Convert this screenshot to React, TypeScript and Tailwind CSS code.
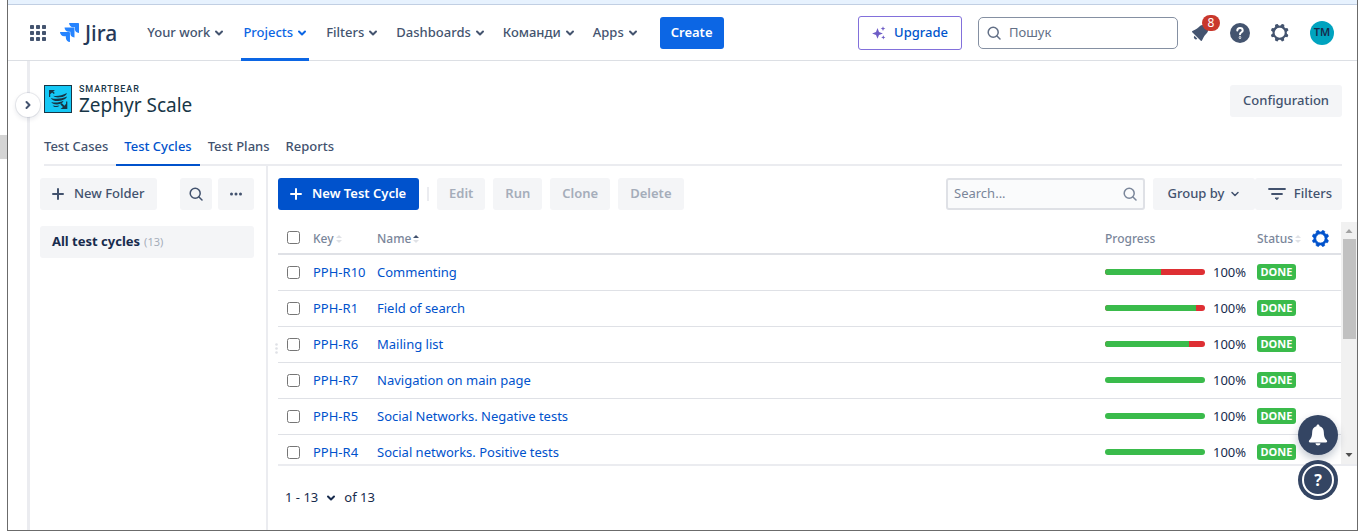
import React from "react";

const GEAR =
  "M11.701 16.7a5.002 5.002 0 110-10.003 5.002 5.002 0 010 10.004m8.368-3.117a1.995 1.995 0 01-1.346-1.885c0-.876.563-1.613 1.345-1.885a.48.48 0 00.315-.574 8.947 8.947 0 00-.836-1.993.477.477 0 00-.598-.195 2.04 2.04 0 01-1.29.08 1.988 1.988 0 01-1.404-1.395 2.04 2.04 0 01.076-1.297.478.478 0 00-.196-.597 8.98 8.98 0 00-1.975-.826.479.479 0 00-.574.314 1.995 1.995 0 01-1.885 1.346 1.994 1.994 0 01-1.884-1.345.482.482 0 00-.575-.315c-.708.2-1.379.485-2.004.842a.47.47 0 00-.198.582A2.002 2.002 0 014.445 7.06a.478.478 0 00-.595.196 8.946 8.946 0 00-.833 1.994.48.48 0 00.308.572 1.995 1.995 0 011.323 1.877c0 .867-.552 1.599-1.324 1.877a.479.479 0 00-.308.57 8.99 8.99 0 00.723 1.79.477.477 0 00.624.194c.595-.273 1.343-.264 2.104.238.117.077.225.185.302.3.527.8.512 1.58.198 2.188a.473.473 0 00.168.628 8.946 8.946 0 002.11.897.474.474 0 00.57-.313 1.995 1.995 0 011.886-1.353c.87 0 1.606.552 1.885 1.353a.477.477 0 00.571.313 8.964 8.964 0 001.883-.77.474.474 0 00.18-.63c-.307-.605-.31-1.373.225-2.168.08-.118.194-.23.313-.308.767-.502 1.52-.508 2.12-.23a.477.477 0 00.624-.193c.314-.559.564-1.158.743-1.786a.476.476 0 00-.31-.575";

const NAV = ["Your work", "Projects", "Filters", "Dashboards", "Команди", "Apps"];
const TABS = ["Test Cases", "Test Cycles", "Test Plans", "Reports"];
const CYCLES = [
  { id: "PPH-R10", name: "Commenting", passed: 56 },
  { id: "PPH-R1", name: "Field of search", passed: 91 },
  { id: "PPH-R6", name: "Mailing list", passed: 84 },
  { id: "PPH-R7", name: "Navigation on main page", passed: 100 },
  { id: "PPH-R5", name: "Social Networks. Negative tests", passed: 100 },
  { id: "PPH-R4", name: "Social networks. Positive tests", passed: 100 },
];

function Chevron({ className = "" }: { className?: string }) {
  return (
    <svg viewBox="0 0 10 8" className={`h-2 w-2.5 shrink-0 stroke-2 ${className}`} fill="none" stroke="currentColor" strokeLinecap="round" strokeLinejoin="round">
      <path d="M2 2.5l3 3 3-3" />
    </svg>
  );
}

function Magnifier({ className = "" }: { className?: string }) {
  return (
    <svg viewBox="0 0 14 14" className={`size-3.5 shrink-0 ${className}`} fill="none" stroke="currentColor" strokeWidth="1.5" strokeLinecap="round">
      <circle cx="6.2" cy="6.2" r="5" />
      <path d="M10 10l3 3" />
    </svg>
  );
}

function Plus() {
  return (
    <svg viewBox="0 0 12 12" className="size-3 shrink-0" stroke="currentColor" strokeWidth="2" strokeLinecap="round">
      <path d="M6 1v10M1 6h10" />
    </svg>
  );
}

function SortArrows({ up = false }: { up?: boolean }) {
  return (
    <svg viewBox="0 0 6 8" className="h-2 w-1.5 shrink-0">
      <path d="M0 3l3-3 3 3z" fill={up ? "#42526e" : "#dfe1e6"} />
      <path d="M0 5h6l-3 3z" fill="#dfe1e6" />
    </svg>
  );
}

function ZephyrMark() {
  return (
    <svg viewBox="0 0 28 28" className="size-7 shrink-0">
      <rect x="0.5" y="0.5" width="27" height="27" fill="#15c8f5" stroke="#173647" />
      <g fill="#173647">
        <path d="M5 5h6L9.200 6.600l1.600 1.500-1 1-1.700-1.500L6.200 9.200V12H5z" />
        <path d="M23.300 24H16.500l2.500-2-2.600-2.600 1.300-1.300 2.700 2.600 1.700-1.900V16.500h1.200z" />
        <path d="M9.200 10.700c4.500.6 8.800-.3 13.800-2.800-.6 2.500-3.400 4-7.200 4.400-3 .3-5.400-.200-6.600-1.600z" />
        <path d="M6.800 12.900c4.500 1.700 10.500 1 16.200-1.300-.8 2.600-4.300 4.200-8.700 4.400-3.900.1-6.600-.9-7.500-3.100z" />
        <path d="M7.300 17c3.500 1.200 8.200.6 12.400-1.200-.9 2.300-3.300 3.500-6.400 3.600-3.200.1-5.300-.7-6-2.400z" />
        <path d="M8.700 20.500c2.300.6 4.600.5 6.800-.1-1 1.300-2.400 1.800-4 1.700-1.400-.1-2.400-.7-2.800-1.600z" />
      </g>
    </svg>
  );
}

function TopBar() {
  return (
    <header className="flex h-14 shrink-0 items-center border-b border-[#dcdfe4] pr-[23px] pl-[22px] text-[#44546f]">
      <button type="button" aria-label="Switch apps">
        <svg viewBox="0 0 16 16" className="size-4" fill="currentColor">
          {[0, 6, 12].map((y) => [0, 6, 12].map((x) => <rect key={`${x}-${y}`} x={x} y={y} width="4" height="4" rx="0.8" />))}
        </svg>
      </button>
      <a href="#home" className="ml-3.5 flex items-center gap-1.5 text-[#253858]">
        <svg viewBox="0 0 24 24" className="size-[19px]" fill="#2684ff">
          <path d="M11.571 11.513H0a5.218 5.218 0 0 0 5.232 5.215h2.130v2.057A5.215 5.215 0 0 0 12.575 24V12.518a1.005 1.005 0 0 0-1.005-1.005z" />
          <path d="M17.294 5.757H5.736a5.215 5.215 0 0 0 5.215 5.214h2.129v2.058a5.218 5.218 0 0 0 5.215 5.214V6.758a1.001 1.001 0 0 0-1.001-1.001z" />
          <path d="M23.013 0H11.455a5.215 5.215 0 0 0 5.215 5.215h2.129v2.057A5.215 5.215 0 0 0 24 12.483V1.005A1.001 1.001 0 0 0 23.013 0Z" />
        </svg>
        <span className="text-[21px] leading-6 font-medium">Jira</span>
      </a>
      <nav className="ml-6 flex h-14 items-stretch gap-1.5 text-[13px] font-medium">
        {NAV.map((item) => (
          <button
            key={item}
            type="button"
            className={
              item === "Projects"
                ? "mx-[5px] flex items-center gap-1 border-y-3 border-t-transparent border-b-[#0c66e4] px-0.5 text-[#0c66e4]"
                : "flex items-center gap-1 px-1.5"
            }
          >
            {item}
            <Chevron />
          </button>
        ))}
      </nav>
      <button type="button" className="ml-4 h-8 rounded-[3px] bg-[#0c66e4] px-[11px] text-[13px] font-semibold text-white">
        Create
      </button>
      <div className="ml-auto flex items-center">
        <button type="button" className="flex h-[34px] w-[104px] items-center justify-center gap-2 rounded-[3px] border border-[#8270db] text-[13px] font-medium text-[#0055cc]">
          <svg viewBox="0 0 14 14" className="size-3.5" fill="#6e5dc6">
            <path d="M5.500 2L7 5.900 10.900 7.400 7 8.900 5.500 12.800 4 8.900.1 7.400 4 5.900z" />
            <path d="M11 .2l.7 1.700 1.700.7-1.700.7L11 5l-.7-1.700-1.700-.7 1.700-.7zM11.300 9.300l.6 1.500 1.500.6-1.500.6-.6 1.500-.6-1.500-1.500-.6 1.500-.6z" />
          </svg>
          Upgrade
        </button>
        <label className="ml-4 flex h-8 w-[200px] items-center gap-2 rounded-[5px] border border-[#8590a2] px-2 text-[#626f86]">
          <Magnifier />
          <input aria-label="Пошук" placeholder="Пошук" className="w-full min-w-0 text-[13px] outline-none placeholder:text-[#626f86]" />
        </label>
        <button type="button" aria-label="Notifications" className="relative ml-2.5">
          <svg viewBox="0 0 24 24" className="size-6" fill="currentColor">
            <path d="M6.485 17.669a2 2 0 002.829 0l-2.829-2.830a2 2 0 000 2.830zm4.897-12.191l-.725.725c-.782.782-2.210 1.813-3.206 2.311l-3.017 1.509c-.495.248-.584.774-.187 1.171l8.556 8.556c.398.396.922.313 1.171-.188l1.510-3.016c.494-.988 1.526-2.420 2.311-3.206l.725-.726a5.048 5.048 0 00.640-6.356 1.010 1.010 0 10-1.354-1.494c-.023.025-.046.049-.066.075a5.043 5.043 0 00-2.788-.840 5.036 5.036 0 00-3.570 1.478z" />
          </svg>
          <span className="absolute -top-1.5 left-3.5 flex h-4 w-[18px] items-center justify-center rounded-full bg-[#c9372c] text-[12px] leading-4 text-white">8</span>
        </button>
        <button type="button" aria-label="Help" className="ml-[18px] flex size-5 items-center justify-center rounded-full bg-[#44546f] text-white">
          <svg viewBox="0 0 12 14" className="h-3.5 w-3" fill="none" stroke="currentColor" strokeWidth="2" strokeLinecap="round">
            <path d="M3.300 4.600C3.300 2.900 4.400 2 6 2s2.700 1 2.700 2.400C8.700 6.300 6 6.300 6 8.300" />
            <circle cx="6" cy="11.600" r="0.300" />
          </svg>
        </button>
        <button type="button" aria-label="Settings" className="ml-[18px]">
          <svg viewBox="0 0 24 24" className="size-6" fill="currentColor" fillRule="evenodd">
            <path d={GEAR} />
          </svg>
        </button>
        <button type="button" aria-label="Your profile" className="ml-[18px] flex size-6 items-center justify-center rounded-full bg-[#00a3bf] text-[11px] font-semibold text-[#172b4d]">
          TM
        </button>
      </div>
    </header>
  );
}

function AppHeader() {
  return (
    <div className="pr-[15px] pl-3.5">
      <div className="flex items-start justify-between pt-6">
        <div className="flex gap-[7px] text-[#173647]">
          <ZephyrMark />
          <div className="flex flex-col">
            <span className="font-['Roboto','Noto_Sans',sans-serif] text-[9px] leading-[9px] font-medium tracking-widest">SMARTBEAR</span>
            <span className="text-[19px] leading-[22px]">Zephyr Scale</span>
          </div>
        </div>
        <button type="button" className="h-8 rounded-[3px] bg-[#f4f5f7] px-[13px] text-[13px] font-medium text-[#42526e]">
          Configuration
        </button>
      </div>
      <div className="mt-3 flex h-[37px] border-b-2 border-[#ebecf0] text-[13px] font-medium text-[#42526e]">
        {TABS.map((t, i) => (
          <a
            key={t}
            href={`#tab-${i}`}
            className={
              t === "Test Cycles"
                ? "-mb-0.5 flex items-center border-b-2 border-[#0052cc] px-2 text-[#0052cc]"
                : "flex items-center px-2 first:pl-0"
            }
          >
            {t}
          </a>
        ))}
      </div>
    </div>
  );
}

function FolderPane() {
  return (
    <aside className="w-[238px] shrink-0 border-r-2 border-[#ebecf0] pt-3 pr-3 pl-2.5 text-[#42526e]">
      <div className="flex">
        <button type="button" className="flex h-8 w-[117px] items-center gap-2.5 rounded-[3px] bg-[#f4f5f7] px-3 text-[13px] font-medium whitespace-nowrap">
          <Plus />
          New Folder
        </button>
        <button type="button" aria-label="Search folders" className="ml-auto flex size-8 items-center justify-center rounded-[3px] bg-[#f4f5f7]">
          <Magnifier />
        </button>
        <button type="button" aria-label="More" className="ml-1.5 flex h-8 w-9 items-center justify-center rounded-[3px] bg-[#f4f5f7]">
          <svg viewBox="0 0 12 4" className="h-1 w-3" fill="currentColor">
            <circle cx="1.500" cy="2" r="1.500" />
            <circle cx="6" cy="2" r="1.500" />
            <circle cx="10.500" cy="2" r="1.500" />
          </svg>
        </button>
      </div>
      <a href="#all" className="mt-4 flex h-8 items-center gap-1 rounded-[3px] bg-[#f4f5f7] px-3">
        <span className="text-[13px] font-bold text-[#172b4d]">All test cycles</span>
        <span className="text-[11px] text-[#a5adba]">(13)</span>
      </a>
    </aside>
  );
}

function Toolbar() {
  return (
    <div className="mr-[15px] flex h-8 shrink-0 text-[13px] font-medium text-[#42526e]">
      <button type="button" className="flex w-[141px] items-center gap-2.5 rounded-[3px] bg-[#0052cc] px-3 font-semibold whitespace-nowrap text-white">
        <Plus />
        New Test Cycle
      </button>
      <span className="mx-2 h-3.5 w-0.5 self-center bg-[#ebecf0]" />
      <div className="flex gap-2 font-semibold text-[#a5adba]">
        {["Edit", "Run", "Clone", "Delete"].map((a) => (
          <button key={a} type="button" disabled className="rounded-[3px] bg-[#f4f5f7] px-3">
            {a}
          </button>
        ))}
      </div>
      <label className="ml-auto flex w-[199px] items-center rounded-[3px] border-2 border-[#dfe1e6] bg-[#fafbfc] px-1.5 text-[#7a869a]">
        <input aria-label="Search" placeholder="Search..." className="w-full min-w-0 font-normal outline-none placeholder:text-[#7a869a]" />
        <Magnifier />
      </label>
      <button type="button" className="ml-2 flex w-[102px] items-center justify-center gap-1.5 rounded-[3px] bg-[#f4f5f7]">
        Group by
        <Chevron className="stroke-[1.5]" />
      </button>
      <button type="button" className="flex w-[87px] items-center justify-end gap-2 rounded-[3px] bg-[#f4f5f7] pr-2.5">
        <svg viewBox="0 0 18 12" className="h-3 w-[18px]" fill="none" stroke="currentColor" strokeWidth="1.800" strokeLinecap="round">
          <path d="M1 1h16M4 6h10" />
          <path d="M7.500 10h3L9 11.500z" strokeWidth="1" fill="currentColor" />
        </svg>
        Filters
      </button>
    </div>
  );
}

function CycleTable() {
  return (
    <table className="w-full table-fixed border-collapse text-left text-[13px]">
      <colgroup>
        <col className="w-[35px]" />
        <col className="w-[64px]" />
        <col />
        <col className="w-[152px]" />
        <col className="w-[84px]" />
      </colgroup>
      <thead className="text-[12px] text-[#7a869a]">
        <tr className="h-[33px] shadow-[inset_0_-2px_0_#dfe1e6]">
          <th className="pb-0.5 pl-[9px]">
            <input type="checkbox" aria-label="Select all" className="block size-[13px]" />
          </th>
          <th className="font-medium">
            <span className="flex items-center gap-0.5">Key<SortArrows /></span>
          </th>
          <th className="font-medium">
            <span className="flex items-center gap-0.5">Name<SortArrows up /></span>
          </th>
          <th className="font-medium">Progress</th>
          <th className="font-medium">
            <span className="flex items-center gap-0.5">
              Status
              <SortArrows />
              <button type="button" aria-label="Table settings" className="mr-3 ml-auto text-[#0052cc]">
                <svg viewBox="2.500 2.500 18.500 18.500" className="size-[17px]" fill="currentColor" stroke="currentColor" strokeWidth="0.800" fillRule="evenodd">
                  <path d={GEAR} />
                </svg>
              </button>
            </span>
          </th>
        </tr>
      </thead>
      <tbody>
        {CYCLES.map((c) => (
          <tr key={c.id} className="h-9 shadow-[inset_0_-1px_0_#dfe1e6]">
            <td className="pb-0.5 pl-[9px]">
              <input type="checkbox" aria-label={`Select ${c.id}`} className="block size-[13px]" />
            </td>
            <td className="whitespace-nowrap">
              <a href={`#${c.id}`} className="text-[#0052cc]">{c.id}</a>
            </td>
            <td>
              <a href={`#${c.id}`} className="text-[#0052cc]">{c.name}</a>
            </td>
            <td>
              <div className="flex items-center gap-2 text-[#172b4d]">
                <div className="mb-0.5 flex h-1.5 w-[100px] shrink-0 overflow-hidden rounded-full bg-[#de2f33]">
                  <div className="bg-[#3abb4b]" style={{ width: `${c.passed}%` }} />
                </div>
                100%
              </div>
            </td>
            <td className="pb-0.5">
              <span className="block h-4 w-[39px] rounded-[3px] bg-[#3abb4b] text-center text-[11px] leading-4 font-bold text-white">DONE</span>
            </td>
          </tr>
        ))}
      </tbody>
    </table>
  );
}

function ScrollTrack() {
  return (
    <div aria-hidden="true" className="flex w-4 shrink-0 flex-col items-center bg-[#f1f1f1]">
      <svg viewBox="0 0 16 17" className="h-[17px] w-4" fill="#a3a3a3">
        <path d="M4.500 11h7L8 7z" />
      </svg>
      <div className="h-[100px] w-[13px] bg-[#c1c1c1]" />
      <svg viewBox="0 0 16 17" className="mt-auto h-[17px] w-4" fill="#505050">
        <path d="M4.500 6h7L8 10z" />
      </svg>
    </div>
  );
}

export default function App() {
  return (
    <div className="relative h-screen overflow-hidden bg-white px-[7px] font-['Noto_Sans','Open_Sans',sans-serif]">
      <div className="absolute top-[135px] left-0 h-6 w-[7px] bg-[#d4d4d4]" />
      <div className="relative flex h-full flex-col border-x border-b border-[#6b6b6b]">
        <div className="h-[5px] shrink-0 border-b border-[#c1cfe3] bg-[#e7f2fe]" />
        <TopBar />
        <div className="flex min-h-0 flex-1">
          <div className="relative w-[22px] shrink-0 border-r-3 border-[#ebecf0]">
            <button type="button" aria-label="Expand sidebar" className="absolute top-8 left-2 flex size-6 items-center justify-center rounded-full bg-white text-[#42526e] shadow-[0_0_0_1px_rgba(9,30,66,0.08),0_2px_4px_1px_rgba(9,30,66,0.08)]">
              <Chevron className="-rotate-90" />
            </button>
          </div>
          <div className="flex min-w-0 flex-1 flex-col">
            <AppHeader />
            <div className="flex min-h-0 flex-1">
              <FolderPane />
              <main className="relative flex min-w-0 flex-1 flex-col pt-3 pl-2.5">
                <svg viewBox="0 0 3 11" className="absolute top-[177px] left-[7px] h-[11px] w-[3px]" fill="#dfe1e6">
                  <circle cx="1.500" cy="1.500" r="1.300" />
                  <circle cx="1.500" cy="5.500" r="1.300" />
                  <circle cx="1.500" cy="9.500" r="1.300" />
                </svg>
                <Toolbar />
                <div className="mt-3 flex min-h-0 flex-1 border-b-2 border-[#ebecf0]">
                  <div className="min-w-0 flex-1 overflow-hidden">
                    <CycleTable />
                  </div>
                  <ScrollTrack />
                </div>
                <footer className="flex h-16 shrink-0 items-center gap-2 pl-[7px] text-[13px] text-[#172b4d]">
                  <button type="button" className="flex items-center gap-2">
                    1 - 13
                    <Chevron />
                  </button>
                  of 13
                </footer>
              </main>
            </div>
          </div>
        </div>
        <div className="absolute right-[19px] bottom-[30px] flex flex-col gap-[5px] text-white">
          <button type="button" aria-label="Announcements" className="flex size-10 items-center justify-center rounded-full bg-[#344563] shadow-[0_4px_8px_rgba(9,30,66,0.25)]">
            <svg viewBox="0 0 20 22" className="h-[22px] w-5" fill="currentColor">
              <path d="M10 .500c.9 0 1.500.6 1.500 1.500v.3c2.700.7 4.300 3 4.300 5.700 0 4.300.9 6.500 2.900 8.300.9.900.4 2.200-.8 2.200H2.100c-1.200 0-1.700-1.300-.8-2.200C3.300 14.500 4.200 12.300 4.200 8c0-2.700 1.600-5 4.300-5.700V2c0-.9.600-1.500 1.500-1.500zM7.500 19.300h5c-.2 1.400-1.200 2.200-2.500 2.200s-2.300-.8-2.500-2.200z" />
            </svg>
          </button>
          <button type="button" aria-label="Get help" className="flex size-10 items-center justify-center rounded-full bg-[#344563]">
            <span className="flex size-8 items-center justify-center rounded-full border-2 border-white text-[16px] font-bold">?</span>
          </button>
        </div>
      </div>
    </div>
  );
}
